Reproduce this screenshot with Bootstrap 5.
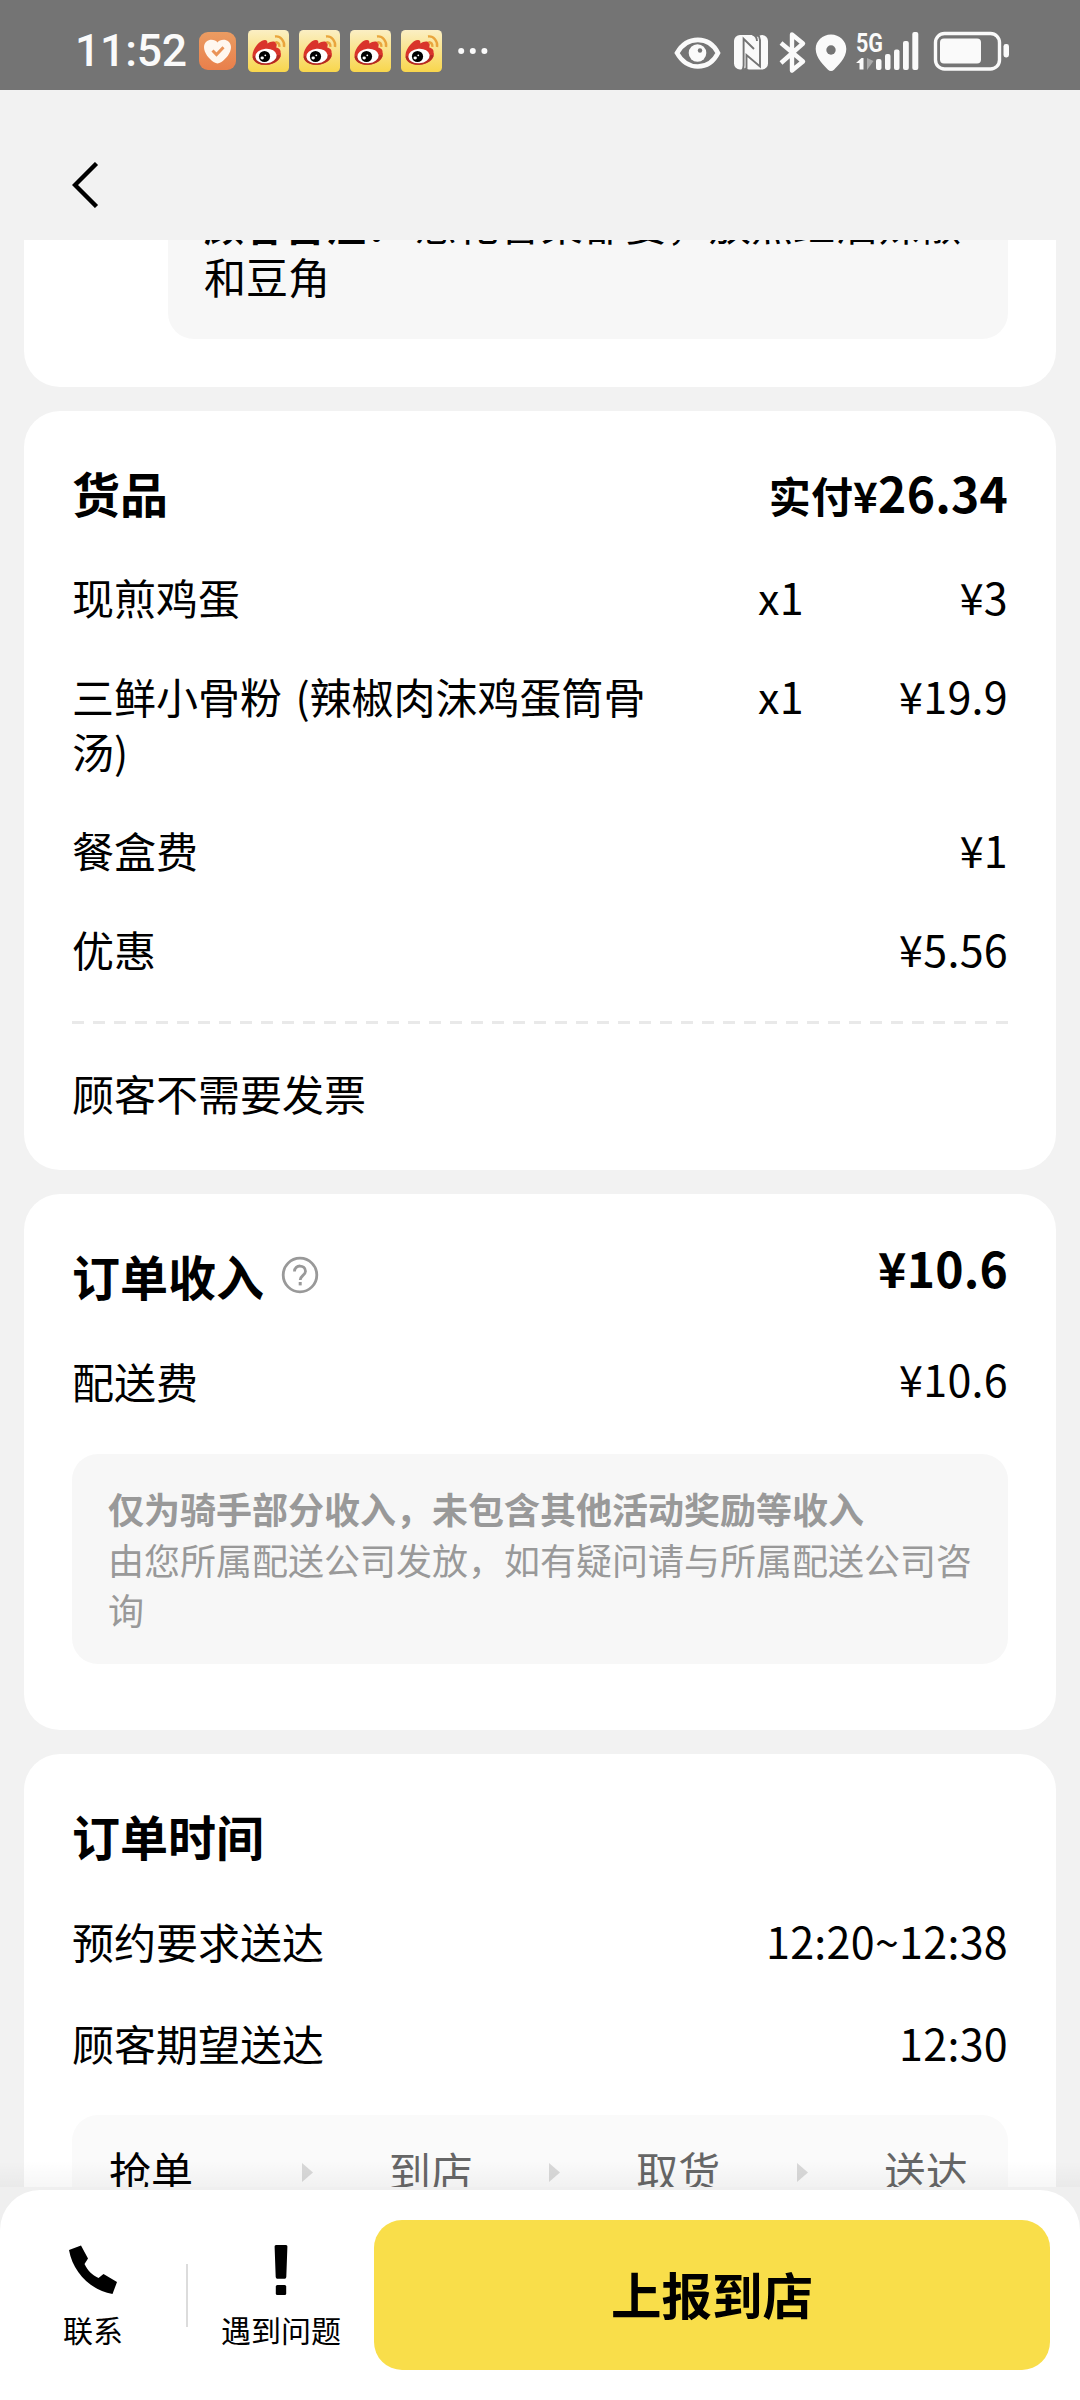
<!DOCTYPE html>
<html lang="zh-CN">
<head>
<meta charset="utf-8">
<meta name="viewport" content="width=device-width, initial-scale=1">
<title>订单详情</title>
<link href="https://cdn.jsdelivr.net/npm/bootstrap@5.3.0/dist/css/bootstrap.min.css" rel="stylesheet">
<style>
  body { width: 1080px; height: 2400px; overflow: hidden; background: #f2f2f2; color: #000;
    font-family: "Noto Sans CJK SC", sans-serif; font-size: 42px; line-height: 55px; }
  svg { display: block; flex: none; }
  .statusbar { height: 90px; background: #747474; padding: 12px 70px 0 75px; }
  .clock { font-family: Roboto, "Noto Sans CJK SC", sans-serif; font-size: 44.5px; font-weight: 500; color: #fafafa; letter-spacing: -.2px; line-height: 70px; width: 124px; }
  .topbar { height: 150px; padding: 72px 72px 0; }
  .feed { height: 1947px; overflow: hidden; padding: 0 24px; gap: 24px; }
  .panel { background: #fff; border-radius: 36px; padding: 46px 48px 0; flex: none; }
  .panel-note { height: 147px; border-radius: 0 0 36px 36px; padding: 0 48px 0 144px; overflow: hidden; }
  .note { display: flow-root; height: 99px; background: #f7f7f7; border-radius: 0 0 26px 26px; padding: 0 36px; line-height: 51px; }
  .note p { margin-top: -43px; white-space: nowrap; }
  .note b { font-size: 40px; letter-spacing: .6px; margin-right: 8px; }
  .panel-goods { height: 759px; }
  .panel-income { height: 536px; }
  .panel-time { height: 480px; }
  .heading { font-size: 48px; font-weight: 700; line-height: 70px; }
  .num { font-size: 43px; letter-spacing: .3px; white-space: nowrap; }
  .num-bold { font-size: 48px; font-weight: 700; letter-spacing: .2px; line-height: 70px; white-space: nowrap; }
  .num-label { font-size: 42px; }
  .goods-head { margin-bottom: 38.5px; }
  .goods-list { gap: 44px; }
  .g-name { width: 602px; word-spacing: 4px; }
  .g-qty { margin-left: 84px; }
  .dash { height: 3px; margin: 45.5px 0 41px;
    background: repeating-linear-gradient(90deg, #e9e9e9 0 12px, transparent 12px 21px); }
  .income-total { margin: -8px 0 8px; }
  .fee-row { margin-top: 42.5px; }
  .fee-row .num { margin-top: -1.5px; }
  .tip { margin-top: 46.500px; height: 210px; background: #f7f7f7; color: #999; border-radius: 26px;
    padding: 29px 36px 0; font-size: 36px; line-height: 50.5px; }
  .steps { margin-top: 45px; height: 120px; background: #fafafa; border-radius: 26px; padding: 27px 40px 0 37px; color: #666; }
  .steps svg { margin-top: 21px; }
  .fade-edge { height: 26px; margin-top: -26px; position: relative; background: linear-gradient(rgba(0,0,0,0), rgba(0,0,0,.035)); }
  .dock-wrap { background: #efefef; padding-top: 3px; position: relative; }
  .dock { height: 210px; background: #fff; border-radius: 40px 40px 0 0; padding: 30px 30px 0 0; }
  .dock-item { font-size: 30px; line-height: 44px; padding-top: 25px; width: 186px; gap: 12px; }
  .dock-line { width: 2px; height: 63px; background: #dcdcdc; margin-top: 44px; }
  .btn-report { width: 676px; height: 150px; border: 0; border-radius: 28px; background: #f9de4a; color: #000;
    font-size: 50.5px; font-weight: 700; padding: 0 0 2px; }
</style>
</head>
<body>
<svg width="0" height="0" class="position-absolute">
  <defs>
    <linearGradient id="gy" x1="0" y1="0" x2="0" y2="1"><stop offset="0" stop-color="#fbefc4"/><stop offset="1" stop-color="#f8d64c"/></linearGradient>
    <linearGradient id="go" x1="0" y1="0" x2="0" y2="1"><stop offset="0" stop-color="#eb9c62"/><stop offset="1" stop-color="#e97f4b"/></linearGradient>
    <symbol id="weibo" viewBox="0 0 41 42">
      <rect width="41" height="42" rx="4.5" fill="url(#gy)"/>
      <path d="M4.500 25C5 18 12 10 17 10c2 0 2.700 1.500 2.300 3.500C22 11.500 26 10.500 28 12.500c1 1.500.8 3 .2 5 3 .5 4.800 2.500 4.300 4.800 2 4.500-3 11.700-14 12.500C9 35.300 4 30.500 4.500 25z" fill="#d9342b"/>
      <path d="M4.600 27c1 5 6.500 8.300 13.900 7.800 7.500-.6 12.500-4.500 14-8.800l-1-1-26 1z" fill="#b32a22"/>
      <ellipse cx="18" cy="26" rx="10.700" ry="7.200" fill="#fff" transform="rotate(-5 18 26)"/>
      <circle cx="16.500" cy="26.500" r="5.600" fill="#000"/>
      <ellipse cx="14.200" cy="28" rx="1.700" ry="1.400" fill="#fff"/><circle cx="17.300" cy="25.300" r=".9" fill="#fff"/>
      <path d="M27 6.500c5.500-.8 10 4.500 9 10.500M27.500 12.300c2.600-.3 4.200 1.700 3.800 4.500" fill="none" stroke="#e9a53d" stroke-width="2.400"/>
    </symbol>
    <symbol id="step-arrow" viewBox="0 0 12 19"><path d="M1 0l11 9.500L1 19z" fill="#d8d8d8"/></symbol>
  </defs>
</svg>

<div class="d-flex flex-column h-100">
  <header class="statusbar d-flex justify-content-between flex-shrink-0">
    <div class="d-flex align-items-center" style="height:78px">
      <span class="clock">11:52</span>
      <svg width="37" height="38" viewBox="0 0 37 38"><rect width="37" height="38" rx="9" fill="url(#go)"/><path d="M18.500 10.500C21 6.500 31.500 6 32 15c0 6-5 12-10 15.300-2.500 1.500-4.500 1.500-7 0C10 27 5 21 5 15c.5-9 11-8.500 13.500-4.500z" fill="#fff7ef"/><path d="M13.500 18.500l4 4 7-7.200" fill="none" stroke="#ea9358" stroke-width="3"/></svg>
      <div class="d-flex" style="gap:10px;margin-left:12px">
        <svg width="41" height="42"><use href="#weibo"/></svg>
        <svg width="41" height="42"><use href="#weibo"/></svg>
        <svg width="41" height="42"><use href="#weibo"/></svg>
        <svg width="41" height="42"><use href="#weibo"/></svg>
      </div>
      <svg class="ms-3" width="30" height="8" viewBox="0 0 30 8" fill="#fafafa"><circle cx="3.200" cy="4" r="3"/><circle cx="14.800" cy="4" r="3"/><circle cx="26.400" cy="4" r="3"/></svg>
    </div>
    <svg width="336" height="46" viewBox="674 28 336 46" style="margin-top:16px" fill="#fafafa">
      <path d="M677 53c10-17.500 32-17.500 41 0-9 18-31 18-41 0z" fill="none" stroke="#fafafa" stroke-width="4.600"/>
      <circle cx="697.500" cy="53" r="8.800"/><circle cx="700" cy="50.500" r="2.200" fill="#747474"/>
      <path d="M740 35h12q3 0 5 2l0 0q3-2 5-2a6 6 0 0 1 6 6v22a6 6 0 0 1-6 6.500h-13q-2 0-4-2-1 2-3 2h-2a6 6 0 0 1-6-6V41a6 6 0 0 1 6-6z"/>
      <path d="M743.200 70.500q-2-2-2-5V38.500L754.500 50V41M747 70l-2.800-4V51.500" fill="none" stroke="none"/>
      <path d="M741.800 71q1.800-2.500 1.800-5.500V38.800L754 49M752.500 34.500q4.500 1.500 4.500 6.500M746.500 71l0-16 13.500 11.500V40q0-3.500-2.500-5.500" fill="none" stroke="#747474" stroke-width="1.900"/>
      <path d="M781 43l22 18.500-11 9V34.500l11 9L781 63" fill="none" stroke="#fafafa" stroke-width="4.400" stroke-linejoin="round"/>
      <path d="M831 34.500c8.500 0 15.300 6.500 15.300 14.500 0 9-8.500 16.500-12.300 20.700-1.700 1.600-4.300 1.600-6 0-3.800-4.200-12.300-11.700-12.300-20.700 0-8 6.800-14.500 15.300-14.500z"/><circle cx="831" cy="50" r="4.700" fill="#747474"/>
      <text x="856" y="51.500" font-family="Roboto, sans-serif" font-weight="700" font-size="25" textLength="27" lengthAdjust="spacingAndGlyphs">5G</text>
      <path d="M856 63l5.500-5h2v11.500h-4V63z"/><path d="M867 58v12l6.500-9z" fill="#aaa"/>
      <rect x="876" y="59" width="5.500" height="11" rx="2"/><rect x="885" y="54" width="5.500" height="16" rx="2"/><rect x="894" y="49.500" width="5.500" height="20.500" rx="2"/><rect x="903" y="41" width="5.800" height="29" rx="2"/><rect x="912.300" y="32" width="6" height="38" rx="2"/>
      <rect x="935.500" y="33.500" width="64" height="35.500" rx="9" fill="none" stroke="#fafafa" stroke-width="3.400"/>
      <rect x="940" y="38.500" width="41" height="25" rx="4"/><rect x="1003.500" y="44" width="5.500" height="13.500" rx="2.400"/>
    </svg>
  </header>

  <nav class="topbar flex-shrink-0">
    <svg width="28" height="46" viewBox="0 0 28 46"><path d="M24.500 1.500L3 23l21.500 21.500" fill="none" stroke="#000" stroke-width="4.400"/></svg>
  </nav>

  <main class="feed d-flex flex-column flex-shrink-0">
    <section class="panel panel-note">
      <div class="note"><p class="mb-0"><b>顾客备注：</b>葱花香菜都要，放点红油辣椒<br>和豆角</p></div>
    </section>

    <section class="panel panel-goods">
      <div class="goods-head d-flex justify-content-between">
        <div class="heading">货品</div>
        <div class="num-bold"><span class="num-label">实付¥</span>26.34</div>
      </div>
      <div class="goods-list d-flex flex-column">
        <div class="d-flex"><div class="g-name">现煎鸡蛋</div><div class="num g-qty">x1</div><div class="num ms-auto">¥3</div></div>
        <div class="d-flex"><div class="g-name">三鲜小骨粉 (辣椒肉沫鸡蛋筒骨汤)</div><div class="num g-qty">x1</div><div class="num ms-auto">¥19.9</div></div>
        <div class="d-flex"><div>餐盒费</div><div class="num ms-auto">¥1</div></div>
        <div class="d-flex"><div>优惠</div><div class="num ms-auto">¥5.56</div></div>
      </div>
      <div class="dash"></div>
      <div>顾客不需要发票</div>
    </section>

    <section class="panel panel-income">
      <div class="d-flex justify-content-between">
        <div class="d-flex align-items-center heading">订单收入
          <svg style="margin-left:17px" width="38" height="38" viewBox="0 0 38 38" fill="none" stroke="#999" stroke-width="2.800"><circle cx="19" cy="19" r="16.800"/><path d="M13.500 15.500c0-7.500 11-7 11-.3 0 4-5.300 4.300-5.300 8.800"/><path d="M19.200 26v3.400" stroke-width="3"/></svg>
        </div>
        <div class="num-bold income-total">¥10.6</div>
      </div>
      <div class="fee-row d-flex justify-content-between"><div>配送费</div><div class="num">¥10.6</div></div>
      <div class="tip"><b>仅为骑手部分收入，未包含其他活动奖励等收入</b><br>由您所属配送公司发放，如有疑问请与所属配送公司咨询</div>
    </section>

    <section class="panel panel-time">
      <div class="heading">订单时间</div>
      <div class="d-flex justify-content-between" style="margin-top:43px"><div>预约要求送达</div><div class="num">12:20~12:38</div></div>
      <div class="d-flex justify-content-between" style="margin-top:47px"><div>顾客期望送达</div><div class="num">12:30</div></div>
      <div class="steps d-flex justify-content-between">
        <span class="text-black">抢单</span>
        <svg style="margin-left:32px" width="12" height="19"><use href="#step-arrow"/></svg>
        <span>到店</span>
        <svg width="12" height="19"><use href="#step-arrow"/></svg>
        <span>取货</span>
        <svg width="12" height="19"><use href="#step-arrow"/></svg>
        <span>送达</span>
      </div>
    </section>
  </main>

  <div class="fade-edge flex-shrink-0"></div>
  <footer class="dock-wrap flex-shrink-0">
    <div class="dock d-flex">
      <div class="dock-item d-flex flex-column align-items-center">
        <svg width="50" height="50" viewBox="0 0 50 50"><path d="M1 5L13 .5l7 13-3.500 5.500c3.500 7 7.500 11 14 14l5-4L49 37l-4.500 12C22 45 5 27 1 5z"/></svg>
        <span>联系</span>
      </div>
      <div class="dock-line"></div>
      <div class="dock-item d-flex flex-column align-items-center">
        <svg width="14" height="50" viewBox="0 0 14 50"><path d="M2 0h10q1.500 0 1.400 1.500L12.300 32q-.1 1.700-1.500 1.700H3.200q-1.400 0-1.500-1.700L.6 1.500Q.5 0 2 0z"/><rect x="1.800" y="40" width="10.400" height="10" rx="1.500"/></svg>
        <span>遇到问题</span>
      </div>
      <button class="btn btn-report" type="button">上报到店</button>
    </div>
  </footer>
</div>
<script src="https://cdn.jsdelivr.net/npm/bootstrap@5.3.0/dist/js/bootstrap.bundle.min.js"></script>
</body>
</html>
